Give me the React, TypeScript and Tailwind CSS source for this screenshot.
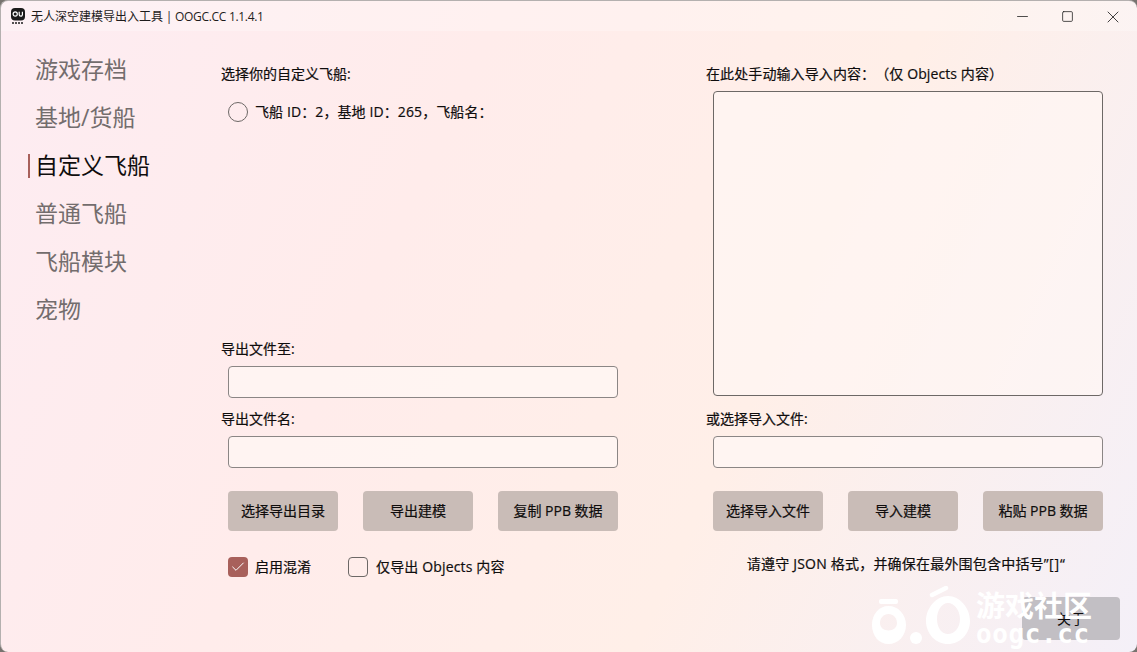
import { Check, Minus, Square, X } from 'lucide-react';

const cjk = "font-['Open_Sans','Noto_Sans_CJK_SC',sans-serif]";

const NAV_ITEMS = ['游戏存档', '基地/货船', '自定义飞船', '普通飞船', '飞船模块', '宠物'];

function Field({ label }: { label: string }) {
  return (
    <div className="flex flex-col">
      <div className="h-[20px] text-[14px] leading-[20px]">{label}</div>
      <div className="mt-[7px] ml-[7px] h-[32px] w-[390px] rounded-[4px] border border-[#8b8685] bg-[#fff6f4]/80" />
    </div>
  );
}

function ActionButton({ label, width }: { label: string; width: string }) {
  return (
    <button className={`h-[40px] ${width} rounded-[4px] bg-[#c9bcb7] pb-[1px] text-[14px] text-[#0f0d0d]`}>
      {label}
    </button>
  );
}

export default function App() {
  return (
    <div className={`${cjk} h-[652px] w-[1137px] overflow-hidden bg-[#77736f] text-[#0f0d0d] [text-spacing-trim:space-all]`}>
      <div className="relative flex h-full w-full flex-col overflow-hidden rounded-[8px] border-l border-t border-[#b4b0af] bg-[linear-gradient(115deg,#fdecf2_0%,#ffeceb_35%,#ffefe8_65%,#f4f0f8_100%)]">
        {/* title bar */}
        <div className="flex h-[30px] shrink-0 items-center bg-white/25 pl-[10px] pt-[1px]">
          <svg width="14" height="17" viewBox="0 0 14 17" className="shrink-0">
            <rect x="0" y="0" width="14" height="12.5" rx="4" fill="#1b1b1b" />
            <circle cx="4.2" cy="6" r="2.1" fill="none" stroke="#fff" strokeWidth="1.2" />
            <path d="M8.2 3.8v2.8a1.6 1.6 0 0 0 3.2 0V3.8" fill="none" stroke="#fff" strokeWidth="1.2" />
            <path d="M1 15h12" stroke="#1b1b1b" strokeWidth="1.6" strokeDasharray="2 1" />
          </svg>
          <span className="ml-[6px] text-[12px] text-[#1e1c1c]">
            无人深空建模导出入工具<span className="tracking-[-0.3px]"> | OOGC.CC 1.1.4.1</span>
          </span>
          <div className="ml-auto flex items-center pr-[2px] text-[#1c1c1c]">
            <span className="flex w-[45px] justify-center"><Minus size={17} strokeWidth={1.1} /></span>
            <span className="flex w-[45px] justify-center"><Square size={13} strokeWidth={1.4} /></span>
            <span className="flex w-[45px] justify-center"><X size={20} strokeWidth={1} /></span>
          </div>
        </div>

        <div className="flex min-h-0 flex-1">
          {/* side nav */}
          <nav className="flex w-[220px] shrink-0 flex-col pl-[27px] pt-[15px]">
            {NAV_ITEMS.map((item) => {
              const active = item === '自定义飞船';
              return (
                <div key={item} className="flex h-[48px] items-center">
                  <span className={`h-[24px] w-[2px] ${active ? 'bg-[#a8605b]' : ''}`} />
                  <span className={`ml-[5px] pb-[2px] text-[23px] ${active ? 'text-[#0f0d0d]' : 'text-[#736d6d]'}`}>{item}</span>
                </div>
              );
            })}
          </nav>

          {/* export column */}
          <div className="flex w-[485px] shrink-0 flex-col pt-[33px] [-webkit-text-stroke-width:0.2px]">
            <div className="h-[20px] text-[14px] leading-[20px]">选择你的自定义飞船:</div>
            <div className="ml-[7px] mt-[18px] flex h-[20px] items-center">
              <span className="h-[20px] w-[20px] rounded-full border border-[#6d6866]" />
              <span className="ml-[7px] pb-[2px] text-[14px] tracking-[0.1px]">飞船 ID：2，基地 ID：265，飞船名：</span>
            </div>
            <div className="mt-[217px] flex flex-col gap-[11px]">
              <Field label="导出文件至:" />
              <Field label="导出文件名:" />
            </div>
            <div className="ml-[7px] mt-[23px] flex gap-[25px]">
              <ActionButton label="选择导出目录" width="w-[110px]" />
              <ActionButton label="导出建模" width="w-[110px]" />
              <ActionButton label="复制 PPB 数据" width="w-[120px]" />
            </div>
            <div className="ml-[7px] mt-[26px] flex h-[20px] items-center">
              <span className="flex h-[20px] w-[20px] items-center justify-center rounded-[4px] bg-[#a8605b] text-white">
                <Check size={16} strokeWidth={1.5} />
              </span>
              <span className="ml-[7px] w-[56px] pb-[2px] text-[14px]">启用混淆</span>
              <span className="ml-[37px] h-[20px] w-[20px] rounded-[4px] border border-[#6d6866]" />
              <span className="ml-[8px] pb-[2px] text-[14px] tracking-[0.15px]">仅导出 Objects 内容</span>
            </div>
          </div>

          {/* import column */}
          <div className="flex flex-1 flex-col pt-[33px] [-webkit-text-stroke-width:0.2px]">
            <div className="h-[20px] text-[14px] leading-[20px] tracking-[0.1px]">在此处手动输入导入内容：（仅 Objects 内容）</div>
            <div className="ml-[7px] mt-[7px] h-[305px] w-[390px] rounded-[4px] border border-[#6d6866] bg-[#fff6f4]/70" />
            <div className="mt-[13px]">
              <Field label="或选择导入文件:" />
            </div>
            <div className="ml-[7px] mt-[23px] flex gap-[25px]">
              <ActionButton label="选择导入文件" width="w-[110px]" />
              <ActionButton label="导入建模" width="w-[110px]" />
              <ActionButton label="粘贴 PPB 数据" width="w-[120px]" />
            </div>
            <div className="ml-[5px] mt-[22px] w-[390px] text-center text-[14px] tracking-[0.2px]">
              请遵守 JSON 格式，并确保在最外围包含中括号”<span className="tracking-[1px]">[]</span>“
            </div>
          </div>
        </div>

        {/* about button with the site watermark over it */}
        <button className="absolute left-[1021px] top-[596px] h-[43px] w-[98px] rounded-[4px] bg-[#c2bfc4] text-[14px] text-[#0f0d0d]">
          关于
        </button>
        <div className="pointer-events-none absolute left-[869px] top-[585px] flex items-start text-white">
          <svg width="102" height="60" viewBox="0 0 102 60" fill="#fff">
            <rect x="9" y="13" width="19" height="5" rx="2" />
            <path fillRule="evenodd" d="M18.5 20C28 20 36 28 36 39C36 50 28 58 18.5 58C9 58 2 50 2 39C2 28 9 20 18.5 20ZM18.5 28C13.5 28 10 32 10 37C10 41.500 13.500 44.500 18.500 44.500C23.500 44.500 27 41.500 27 37C27 32 23.500 28 18.500 28Z" />
            <circle cx="46" cy="52" r="6" />
            <path fillRule="evenodd" d="M78 10C90 10 100 22 100 35C100 48 90 58 78 58C66 58 56 48 56 35C56 22 66 10 78 10ZM78 17C72 17 67 24 67 33C67 42 72 48 78 48C84 48 90 42 90 33C90 24 84 17 78 17Z" />
            <path d="M62 9L76 2" stroke="#fff" strokeWidth="4.500" strokeLinecap="round" />
          </svg>
          <div className="ml-[4px] flex flex-col">
            <span className="mt-[4px] text-[29px] font-bold leading-[32px]">游戏社区</span>
            <span className="font-['DejaVu_Sans_Mono',monospace] text-[26px] font-bold leading-[24px] tracking-[0.6px]">oogc.cc</span>
          </div>
        </div>
      </div>
    </div>
  );
}
